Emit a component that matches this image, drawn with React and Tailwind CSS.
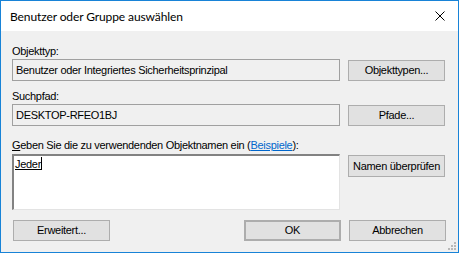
import React from "react";

const font = { fontFamily: '"Liberation Sans", Arial, sans-serif' };

function Btn({ children, className = "" }) {
  return (
    <div className={"flex items-center justify-center whitespace-nowrap bg-[#e1e1e1] border border-[#adadad] text-[11px] text-black " + className}>
      {children}
    </div>
  );
}

export default function App() {
  return (
    <div className="w-[459px] h-[253px] border border-[#1883d7] bg-[#f0f0f0] flex flex-col text-black text-[11px] leading-[15px] tracking-[-0.3px] relative" style={font}>
      <div className="h-[30px] bg-white flex items-center justify-between pl-[9px] pr-[9px] shrink-0">
        <span className="text-[12px] text-[#000] tracking-[-0.1px]" style={{ fontFamily: 'Lato, "Noto Sans", sans-serif' }}>Benutzer oder Gruppe auswählen</span>
        <svg width="10" height="10" viewBox="0 0 10 10" className="mr-[4px]">
          <path d="M0.5 0.5 L9.5 9.5 M9.5 0.5 L0.5 9.5" stroke="#000" strokeWidth="1" />
        </svg>
      </div>
      <div className="flex flex-col pl-[11px] pr-[12px] pt-[12px]">
        <div className="h-[15px] mt-[1px]">Objekttyp:</div>
        <div className="flex items-start gap-[8px]">
          <div className="w-[328px] h-[22px] border border-[#a0a0a0] bg-[#f0f0f0] flex items-center pl-[3px]">Benutzer oder Integriertes Sicherheitsprinzipal</div>
          <Btn className="w-[97px] h-[21px] mt-[1px]">Objekttypen...</Btn>
        </div>
        <div className="h-[15px] mt-[8px]">Suchpfad:</div>
        <div className="flex items-start gap-[8px]">
          <div className="w-[328px] h-[22px] border border-[#a0a0a0] bg-[#f0f0f0] flex items-center pl-[3px]">DESKTOP-RFEO1BJ</div>
          <Btn className="w-[97px] h-[21px] mt-[1px]">Pfade...</Btn>
        </div>
        <div className="h-[15px] mt-[12px]">
          <span className="underline">G</span>eben Sie die zu verwendenden Objektnamen ein (<span className="underline text-[#0066cc]">Beispiele</span>):
        </div>
        <div className="flex items-start gap-[8px] mt-[1px]">
          <div className="w-[328px] h-[56px] bg-white border-t-2 border-l-2 border-t-[#828282] border-l-[#828282] border-r border-b border-r-[#e3e3e3] border-b-[#e3e3e3] pl-[1px] pt-[1px]">
            <span className="underline">Jeder</span><span className="inline-block w-[1px] h-[13px] bg-black align-[-2px]"></span>
          </div>
          <Btn className="w-[97px] h-[22px] mt-[1px]">Namen überprüfen</Btn>
        </div>
        <div className="flex items-start mt-[10px]">
          <Btn className="w-[97px] h-[21px] ml-[1px]">Erweitert...</Btn>
          <div className="flex-1"></div>
          <Btn className="w-[97px] h-[21px] border-2 border-[#0078d7]">OK</Btn>
          <Btn className="w-[97px] h-[21px] ml-[8px]">Abbrechen</Btn>
        </div>
      </div>
      <svg width="10" height="10" viewBox="0 0 10 10" className="absolute right-[1px] bottom-[1px]">
        <rect x="7" y="1" width="2" height="2" fill="#b8b8b8" />
        <rect x="4" y="4" width="2" height="2" fill="#b8b8b8" />
        <rect x="7" y="4" width="2" height="2" fill="#b8b8b8" />
        <rect x="1" y="7" width="2" height="2" fill="#b8b8b8" />
        <rect x="4" y="7" width="2" height="2" fill="#b8b8b8" />
        <rect x="7" y="7" width="2" height="2" fill="#b8b8b8" />
      </svg>
    </div>
  );
}
